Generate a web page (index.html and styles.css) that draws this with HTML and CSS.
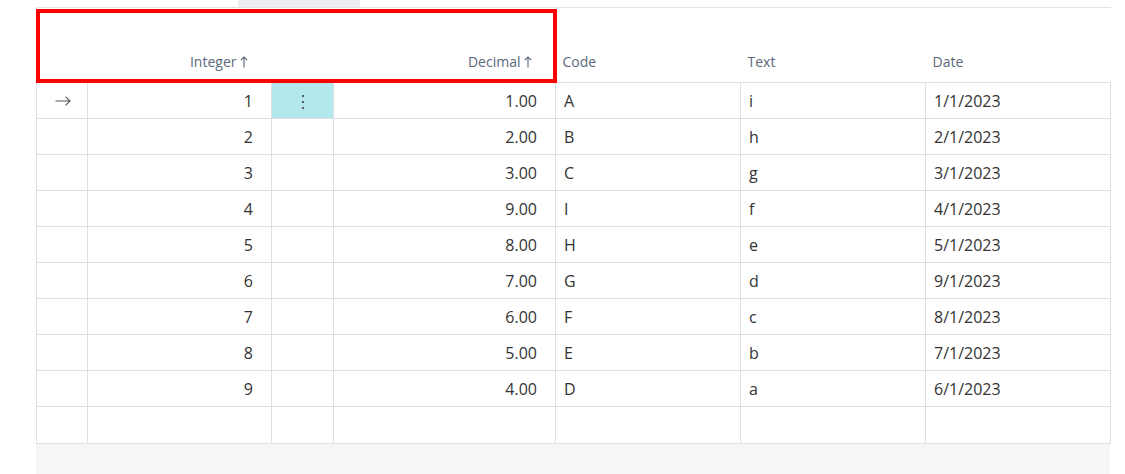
FILE: index.html
```html
<!DOCTYPE html>
<html>
<head>
<meta charset="utf-8">
<link rel="stylesheet" href="styles.css">
</head>
<body>
<div class="page">
  <div class="tabbar"><div class="tab"></div></div>
  <div class="grid-wrap">
    <table class="grid">
      <colgroup>
        <col class="c-sel"><col class="c-int"><col class="c-menu"><col class="c-dec"><col class="c-txt"><col class="c-txt"><col class="c-txt">
      </colgroup>
      <thead>
        <tr>
          <th></th>
          <th class="num">Integer<svg class="sort" viewBox="0 0 8 12" width="8" height="12"><path d="M4 11.5V1M0.8 4.2L4 1l3.2 3.2" fill="none" stroke="currentColor" stroke-width="1.1"/></svg></th>
          <th></th>
          <th class="num">Decimal<svg class="sort" viewBox="0 0 8 12" width="8" height="12"><path d="M4 11.5V1M0.8 4.2L4 1l3.2 3.2" fill="none" stroke="currentColor" stroke-width="1.1"/></svg></th>
          <th>Code</th>
          <th>Text</th>
          <th>Date</th>
        </tr>
      </thead>
      <tbody>
        <tr>
          <td class="sel"><svg viewBox="0 0 16 10" width="16" height="10"><path d="M0.5 5H15M10.5 0.6L15 5l-4.5 4.4" fill="none" stroke="#555" stroke-width="1.1"/></svg></td>
          <td class="num">1</td>
          <td class="menu active"><span class="dots"><i></i><i></i><i></i></span></td>
          <td class="num">1.00</td><td>A</td><td>i</td><td>1/1/2023</td>
        </tr>
        <tr><td></td><td class="num">2</td><td></td><td class="num">2.00</td><td>B</td><td>h</td><td>2/1/2023</td></tr>
        <tr><td></td><td class="num">3</td><td></td><td class="num">3.00</td><td>C</td><td>g</td><td>3/1/2023</td></tr>
        <tr><td></td><td class="num">4</td><td></td><td class="num">9.00</td><td>I</td><td>f</td><td>4/1/2023</td></tr>
        <tr><td></td><td class="num">5</td><td></td><td class="num">8.00</td><td>H</td><td>e</td><td>5/1/2023</td></tr>
        <tr><td></td><td class="num">6</td><td></td><td class="num">7.00</td><td>G</td><td>d</td><td>9/1/2023</td></tr>
        <tr><td></td><td class="num">7</td><td></td><td class="num">6.00</td><td>F</td><td>c</td><td>8/1/2023</td></tr>
        <tr><td></td><td class="num">8</td><td></td><td class="num">5.00</td><td>E</td><td>b</td><td>7/1/2023</td></tr>
        <tr><td></td><td class="num">9</td><td></td><td class="num">4.00</td><td>D</td><td>a</td><td>6/1/2023</td></tr>
        <tr class="empty"><td></td><td></td><td></td><td></td><td></td><td></td><td></td></tr>
      </tbody>
    </table>
    <div class="highlight"></div>
    <div class="footer"></div>
  </div>
</div>
</body>
</html>
```

FILE: styles.css
```css
html, body {
  margin: 0;
  padding: 0;
  background: #ffffff;
}
body {
  font-family: "Open Sans", "Noto Sans", sans-serif;
  color: #333333;
}
.page {
  width: 1125px;
  height: 474px;
  overflow: hidden;
}
.tabbar {
  height: 7px;
  padding-left: 238px;
}
.tab {
  width: 122px;
  height: 7px;
  background: #eceef1;
}
.grid-wrap {
  position: relative;
  margin-left: 36px;
  width: 1075px;
}
.grid {
  border-collapse: collapse;
  table-layout: fixed;
  width: 1075px;
}
.c-sel { width: 51px; }
.c-int { width: 184px; }
.c-menu { width: 62px; }
.c-dec { width: 222px; }
.c-txt { width: 185px; }
.grid thead tr {
  height: 75px;
  border-top: 1px solid #e1e3e6;
  border-bottom: 1px solid #dcdfe3;
}
.grid th {
  font-weight: 400;
  font-size: 14px;
  color: #5b687b;
  text-align: left;
  vertical-align: bottom;
  padding: 0 8px 11px 7px;
  white-space: nowrap;
}
.grid th.num {
  text-align: right;
  padding-right: 24px;
}
.sort {
  margin-left: 3px;
  vertical-align: -1px;
}
.grid td {
  border: 1px solid #dcdfe3;
  height: 35px;
  padding: 0 8px;
  font-size: 16px;
  line-height: 20px;
  white-space: nowrap;
}
.grid td.num {
  text-align: right;
  padding-right: 18px;
}
.grid td.sel {
  text-align: center;
  padding: 0;
}
.grid td.sel svg {
  display: block;
  margin: 0 auto;
  position: relative;
  left: 1px;
}
.grid td.menu {
  padding: 0;
  text-align: center;
}
.grid td.active {
  background: #b3e9ed;
}
.dots {
  display: inline-flex;
  flex-direction: column;
  gap: 4px;
  vertical-align: middle;
}
.dots i {
  display: block;
  width: 2px;
  height: 2px;
  border-radius: 1px;
  background: #333;
}
.grid tr.empty td {
  height: 36px;
}
.highlight {
  position: absolute;
  left: 0;
  top: 2px;
  width: 513px;
  height: 66px;
  border: 4px solid #ff0000;
  pointer-events: none;
}
.footer {
  height: 32px;
  background: #f5f6f8;
  width: 1074px;
}
```
